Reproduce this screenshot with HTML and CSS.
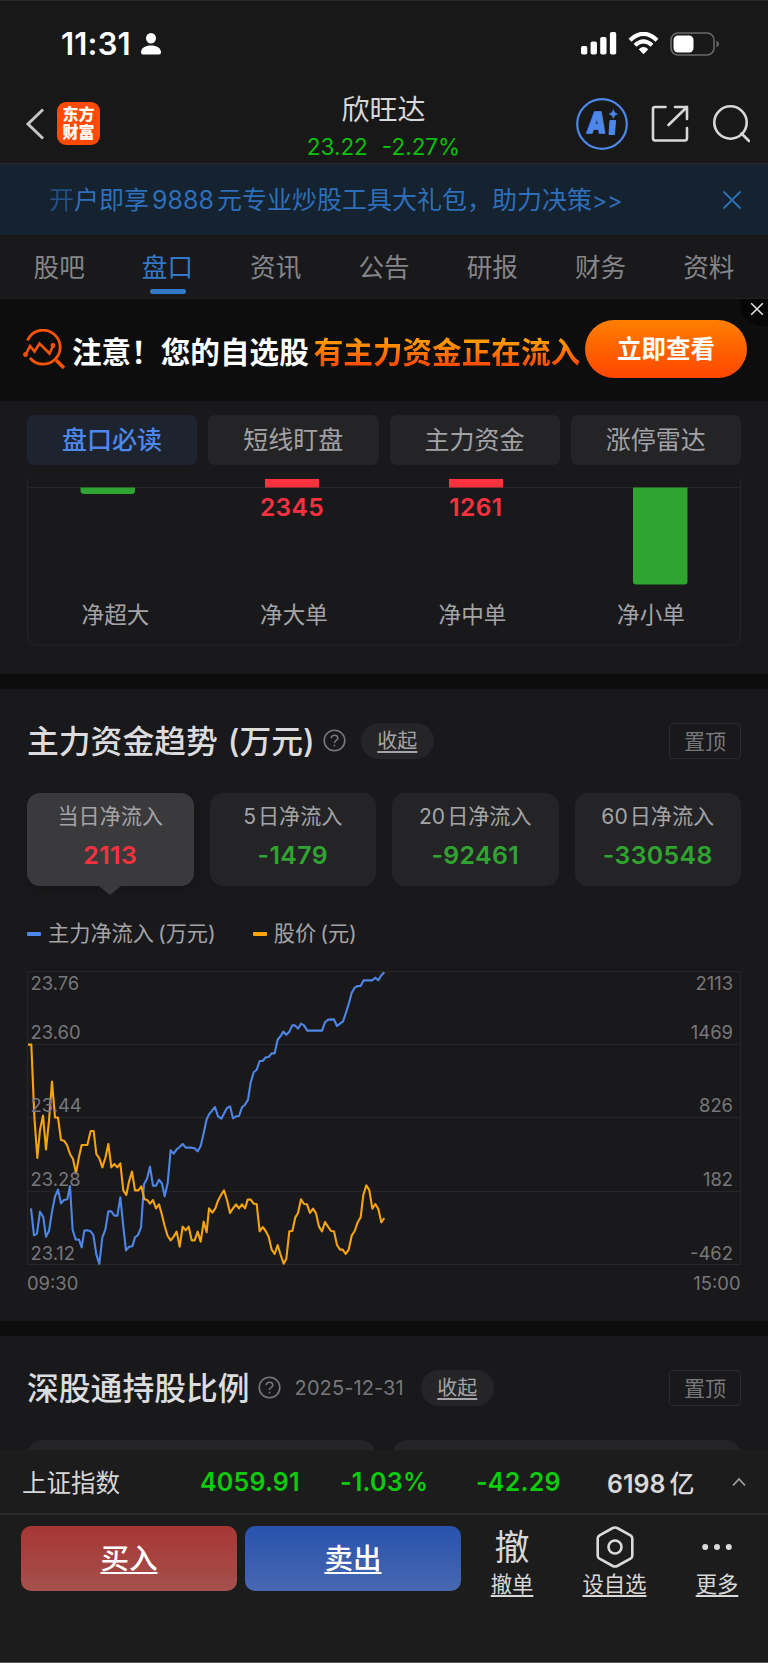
FILE: index.html
```html
<!DOCTYPE html>
<html lang="zh-CN">
<head>
    <meta charset="UTF-8">
    <meta name="viewport" content="width=device-width, initial-scale=1.0">
    <title>欣旺达 - 盘口</title>
    <link rel="stylesheet" href="styles.css">
</head>
<body>

    <!-- Status bar -->
    <div class="status-bar">
        <span class="time">11:31</span>
        <svg class="person" width="20" height="22" viewBox="0 0 20 22" fill="#fff">
            <ellipse cx="10" cy="5.3" rx="5" ry="5.3"/>
            <path d="M0 19.500C0 15 4.500 12.500 10 12.500S20 15 20 19.500Q20 21.500 18 21.500H2Q0 21.500 0 19.500Z"/>
        </svg>
        <div class="status-icons">
            <svg width="36" height="23" viewBox="0 0 36 23" fill="#fff">
                <rect x="0" y="14" width="6.300" height="8.500" rx="1.800"/>
                <rect x="9.600" y="9.500" width="6.300" height="13" rx="1.800"/>
                <rect x="19.200" y="5" width="6.300" height="17.500" rx="1.800"/>
                <rect x="28.900" y="0" width="6.300" height="22.500" rx="1.800"/>
            </svg>
            <svg width="31" height="23" viewBox="0 0 31 23">
                <path d="M2 8.200Q15.500 -4.500 29 8.200" fill="none" stroke="#fff" stroke-width="4.200"/>
                <path d="M7 13.300Q15.500 5.500 24 13.300" fill="none" stroke="#fff" stroke-width="4"/>
                <path d="M10.700 17.200Q15.500 13 20.300 17.200L15.500 22.300Z" fill="#fff"/>
            </svg>
            <svg width="50" height="24" viewBox="0 0 50 24">
                <rect x="1" y="1" width="43" height="22" rx="7" fill="none" stroke="#69696a" stroke-width="1.600"/>
                <rect x="3.500" y="3.500" width="20" height="17" rx="4.500" fill="#fff"/>
                <path d="M46.500 8.500Q49 9.500 49 12T46.500 15.500Z" fill="#69696a"/>
            </svg>
        </div>
    </div>

    <!-- Stock header -->
    <header class="header">
        <div class="header-left">
            <svg width="20" height="32" viewBox="0 0 20 32" fill="none" stroke="#c4c4c4" stroke-width="3">
                <path d="M18 1.500L3 16L18 30.500"/>
            </svg>
            <div class="logo"><span>东方</span><span>财富</span></div>
        </div>
        <div class="stock">
            <h1>欣旺达</h1>
            <p><span>23.22</span><span>-2.27%</span></p>
        </div>
        <div class="header-right">
            <svg class="ai" width="52" height="52" viewBox="0 0 52 52">
                <circle cx="26" cy="26" r="24.800" fill="none" stroke="#4d87ea" stroke-width="2.200"/>
                <text x="14" y="35.500" textLength="19" lengthAdjust="spacingAndGlyphs" transform="skewX(-6)">A</text>
                <path d="M34 22.500H39.500L38.500 36.500H33Z" fill="#4d87ea" stroke="#4d87ea" stroke-linejoin="round"/>
                <path d="M37.300 11.500Q38 15.300 41.500 16Q38 16.700 37.300 20.500Q36.500 16.700 33 16Q36.500 15.300 37.300 11.500Z" fill="#4d87ea" stroke="#4d87ea" stroke-width=".6"/>
            </svg>
            <svg width="38" height="38" viewBox="0 0 38 38" fill="none" stroke="#d8d8d8" stroke-width="2.600" stroke-linecap="round">
                <path d="M14.500 2H4Q2 2 2 4V33Q2 35.500 4 35.500H34Q36 35.500 36 33V23"/>
                <path d="M24 2H36V14M36 2L17.500 20"/>
            </svg>
            <svg width="38" height="38" viewBox="0 0 38 38" fill="none" stroke="#d8d8d8" stroke-width="2.600" stroke-linecap="round">
                <circle cx="18.500" cy="17.500" r="16.200"/>
                <path d="M29.500 28.500L37 36"/>
            </svg>
        </div>
    </header>

    <!-- Promo line -->
    <div class="promo">
        <p><i>开</i>户即享<b>9888</b>元专业炒股工具大礼包，助力决策<em>&gt;&gt;</em></p>
        <svg width="20" height="20" viewBox="0 0 20 20" stroke="#2d6fba" stroke-width="1.800">
            <path d="M1.500 1.500L18.500 18.500M18.500 1.500L1.500 18.500"/>
        </svg>
    </div>

    <nav class="tabs">
        <a>股吧</a>
        <a class="active">盘口</a>
        <a>资讯</a>
        <a>公告</a>
        <a>研报</a>
        <a>财务</a>
        <a>资料</a>
    </nav>

    <!-- Ad banner -->
    <div class="ad">
        <svg width="43" height="41" viewBox="0 0 43 41" fill="none" stroke="#fa5408" stroke-width="2.800">
            <path d="M4.500 11.500A17 17 0 1 1 7 29"/>
            <path d="M33 31L41 39" stroke-width="3.600"/>
            <path d="M3 25L7 17L11.500 22.500L16.500 14.500L26.500 24.500L30 17" stroke-width="2.500"/>
            <circle cx="2.500" cy="25.500" r="1" /><circle cx="30" cy="16.500" r="1"/>
        </svg>
        <p>注意！您的自选股<span>有主力资金正在流入</span></p>
        <button>立即查看</button>
        <div class="ad-close">
            <svg width="14" height="14" viewBox="0 0 14 14" stroke="#e8e8e8" stroke-width="1.500">
                <path d="M1.200 1.200L12.800 12.800M12.800 1.200L1.200 12.800"/>
            </svg>
        </div>
    </div>

    <div class="filters">
        <a class="active">盘口必读</a>
        <a>短线盯盘</a>
        <a>主力资金</a>
        <a>涨停雷达</a>
    </div>

    <!-- Order size bars, scrolled under the filters -->
    <section class="orders">
        <svg width="714" height="167" viewBox="0 0 714 167">
            <path d="M.5 0V156Q.5 166 10.500 166H703.500Q713.500 166 713.500 156V0M0 8.500H714" fill="none" stroke="#262628"/>
            <path d="M53.500 8.500H108V11.500Q108 15 104.500 15H57Q53.500 15 53.500 11.500Z" fill="#30a431"/>
            <path d="M238 0H292V8.500H238ZM422 0H476V8.500H422Z" fill="#fc3140"/>
            <path d="M606 8.500H660.500V102.500Q660.500 105.500 657.500 105.500H609Q606 105.500 606 102.500Z" fill="#30a431"/>
            <g class="order-value">
                <text x="265" y="37">2345</text>
                <text x="449" y="37">1261</text>
            </g>
            <g class="order-label">
                <text x="88.500" y="144">净超大</text>
                <text x="267" y="144">净大单</text>
                <text x="445.500" y="144">净中单</text>
                <text x="624" y="144">净小单</text>
            </g>
        </svg>
    </section>

    <!-- Main capital trend -->
    <section class="trend">
        <div class="section-head">
            <h2>主力资金趋势<span class="unit">(万元)</span></h2>
            <svg class="help" width="23" height="23" viewBox="0 0 23 23">
                <circle cx="11.500" cy="11.500" r="10.300"/>
                <path d="M8.200 9.200Q8.400 6.300 11.500 6.300T14.800 9Q14.800 10.400 13.200 11.400Q11.500 12.400 11.500 14"/>
                <path d="M11.500 15.800V17.400"/>
            </svg>
            <a class="fold">收起</a>
            <a class="pin">置顶</a>
        </div>

        <div class="cards">
            <div class="card active"><span>当日净流入</span><b class="up">2113</b></div>
            <div class="card"><span><i>5</i>日净流入</span><b>-1479</b></div>
            <div class="card"><span><i>20</i>日净流入</span><b>-92461</b></div>
            <div class="card"><span><i>60</i>日净流入</span><b>-330548</b></div>
        </div>

        <div class="legend">
            <span class="blue">主力净流入<i>(万元)</i></span>
            <span class="orange">股价<i>(元)</i></span>
        </div>

        <svg class="chart" width="714" height="336" viewBox="0 0 714 336">
            <path class="grid" d="M0 6.500H714M0 79.500H714M0 152.500H714M0 226.500H714M0 299.500H714M.5 6V300M713.500 6V300"/>
            <g transform="translate(-12 -10) scale(.33333)" class="lines">
                <polyline stroke="#4d86e6" points="48,760 57,841 66,836 75,770 85,787 93,845 102,828 111,770 120,725 129,704 138,745 147,735 157,733 165,693 173,825 182,853 192,854 200,877 208,827 217,826 227,829 235,840 244,898 253,927 262,847 271,824 280,769 289,769 298,782 307,782 316,727 325,815 333,886 343,875 352,874 360,847 369,840 378,818 387,688 396,671 405,635 414,692 423,692 432,674 441,686 449,724 458,685 467,586 476,596 485,583 494,576 503,567 512,578 521,578 530,578 539,580 548,589 557,573 566,535 575,493 582,478 600,456 609,484 619,491 628,474 636,459 645,454 654,490 663,484 672,483 681,457 690,449 699,434 707,383 716,352 725,344 734,318 743,318 752,307 761,306 770,295 779,295 788,254 797,243 805,230 814,239 823,230 832,211 840,211 849,221 858,206 867,211 877,227 921,227 930,202 939,194 957,193 966,213 975,206 984,199 993,173 1002,144 1010,114 1019,98 1028,93 1037,93 1046,76 1072,76 1081,68 1090,76 1099,61 1108,52"/>
                <polyline stroke="#f5a313" points="39,269 49,269 58,485 67,609 75,525 84,482 93,583 102,497 111,380 120,487 129,488 138,555 147,557 156,570 165,597 174,612 183,655 192,605 200,570 217,570 227,528 236,528 244,597 253,610 262,637 271,609 280,567 289,637 298,627 307,637 316,625 325,707 334,720 342,680 351,650 360,706 370,706 379,694 388,733 397,735 405,746 414,735 423,760 432,748 441,780 449,813 458,843 467,856 476,845 485,830 494,875 503,815 512,826 521,815 530,856 539,856 548,830 557,860 566,800 575,832 582,760 592,773 601,760 609,737 618,720 627,706 636,735 645,774 654,760 663,748 672,760 681,748 690,760 698,734 707,734 716,746 725,747 734,829 743,816 752,828 761,845 770,884 779,897 788,870 797,900 806,926 814,911 823,829 832,828 841,787 849,774 858,733 867,747 876,748 885,774 894,761 903,775 912,815 921,829 930,801 939,815 948,828 957,829 966,870 975,884 983,884 992,897 1001,884 1010,842 1019,828 1028,802 1037,787 1045,720 1054,691 1063,706 1072,761 1081,747 1090,762 1099,802 1108,789"/>
            </g>
            <g class="axis">
                <text x="3.500" y="25">23.76</text>
                <text x="3.500" y="73.500">23.60</text>
                <text x="3.500" y="147">23.44</text>
                <text x="3.500" y="221">23.28</text>
                <text x="3.500" y="294.500">23.12</text>
                <text x="0" y="325">09:30</text>
            </g>
            <g class="axis right">
                <text x="706" y="25">2113</text>
                <text x="706" y="73.500">1469</text>
                <text x="706" y="147">826</text>
                <text x="706" y="221">182</text>
                <text x="706" y="294.500">-462</text>
                <text x="713.500" y="325">15:00</text>
            </g>
        </svg>
    </section>

    <!-- Shenzhen connect holdings -->
    <section class="holding">
        <div class="section-head">
            <h2>深股通持股比例</h2>
            <svg class="help" width="23" height="23" viewBox="0 0 23 23">
                <circle cx="11.500" cy="11.500" r="10.300"/>
                <path d="M8.200 9.200Q8.400 6.300 11.500 6.300T14.800 9Q14.800 10.400 13.200 11.400Q11.500 12.400 11.500 14"/>
                <path d="M11.500 15.800V17.400"/>
            </svg>
            <time>2025-12-31</time>
            <a class="fold">收起</a>
            <a class="pin">置顶</a>
        </div>
        <div class="peek"><div></div><div></div></div>
    </section>

    <!-- Bottom bars -->
    <div class="index-bar">
        <span>上证指数</span>
        <b>4059.91</b>
        <b>-1.03%</b>
        <b>-42.29</b>
        <span class="amount">6198<i>亿</i></span>
        <svg width="14" height="10" viewBox="0 0 14 10" fill="none" stroke="#a0a0a0" stroke-width="1.800">
            <path d="M1 8.500L7 2L13 8.500"/>
        </svg>
    </div>

    <footer class="actions">
        <a class="trade buy">买入</a>
        <a class="trade sell">卖出</a>
        <a class="tool">
            <span class="glyph">撤</span>
            <u>撤单</u>
        </a>
        <a class="tool wide">
            <svg width="40" height="42" viewBox="0 0 40 42" fill="none" stroke="#dadada" stroke-width="2.600">
                <path d="M17.800 2Q20 .9 22.200 2L35.500 9.300Q37.300 10.400 37.300 12.500V29.500Q37.300 31.600 35.500 32.700L22.200 40Q20 41.100 17.800 40L4.500 32.700Q2.700 31.600 2.700 29.500V12.500Q2.700 10.400 4.500 9.300Z"/>
                <circle cx="20" cy="21" r="6.500"/>
            </svg>
            <u>设自选</u>
        </a>
        <a class="tool">
            <svg width="32" height="42" viewBox="0 0 32 42" fill="#dadada">
                <circle cx="4.200" cy="21" r="3"/><circle cx="16" cy="21" r="3"/><circle cx="27.800" cy="21" r="3"/>
            </svg>
            <u>更多</u>
        </a>
    </footer>

</body>
</html>
```
FILE: styles.css
```css
* {
    margin: 0;
    padding: 0;
    box-sizing: border-box;
}
body {
    width: 768px;
    height: 1663px;
    overflow: hidden;
    background: #19191b;
    color: #d8d8d8;
    font-family: "Inter", "Noto Sans CJK SC", sans-serif;
    display: flex;
    flex-direction: column;
    white-space: nowrap;
}
body > * {
    flex-shrink: 0;
}
svg {
    display: block;
    flex-shrink: 0;
}
i, em {
    font-style: normal;
}

/* status bar */
.status-bar {
    height: 84px;
    padding: 2px 53px 0 61px;
    border-top: 1px solid #262626;
    background: #181818;
    display: flex;
    align-items: center;
}
.time {
    width: 80px;
    font-size: 31px;
    font-weight: 600;
    letter-spacing: 0.2px;
    color: #fff;
}
.status-icons {
    margin-left: auto;
    display: flex;
    align-items: center;
    gap: 11px;
}
.status-icons svg:last-child {
    margin-right: -5px;
}

/* header */
.header {
    height: 80px;
    padding: 0 18px 0 25px;
    background: #181818;
    border-bottom: 1px solid #262626;
    display: grid;
    grid-template-columns: 1fr 200px 1fr;
}
.header-left {
    display: flex;
    align-items: center;
    gap: 12px;
}
.logo {
    width: 43px;
    height: 43px;
    border-radius: 9px;
    background: #ff4a03;
    color: #fff;
    font-size: 16px;
    font-weight: 900;
    line-height: 18px;
    padding-bottom: 2px;
    display: flex;
    flex-direction: column;
    align-items: center;
    justify-content: center;
}
.stock {
    text-align: center;
    margin-left: -8px;
}
.stock h1 {
    font-size: 28px;
    font-weight: 400;
    line-height: 34px;
    margin-top: 9px;
}
.stock p {
    display: flex;
    justify-content: center;
    gap: 14px;
    font-size: 22.5px;
    line-height: 30px;
    margin-top: 5px;
    color: #0bc00b;
}
.header-right {
    display: flex;
    align-items: center;
    justify-content: flex-end;
    gap: 23px;
}
.ai text {
    font-size: 29px;
    font-weight: 900;
    fill: #4d87ea;
    stroke: #4d87ea;
    stroke-width: 1.4;
}

/* promo */
.promo {
    height: 71px;
    padding: 0 26px 0 49px;
    background: #152230;
    color: #2d6fba;
    display: flex;
    align-items: center;
    justify-content: space-between;
}
.promo p {
    font-size: 25px;
    margin-top: -3px;
}
.promo p i {
    opacity: 0.6;
}
.promo b {
    font-weight: 400;
    margin: 0 3px 0 3px;
}
.promo em {
    font-size: 23px;
}

/* tabs */
.tabs {
    height: 64px;
    padding: 0 5px;
    border-bottom: 1px solid #202022;
    display: grid;
    grid-template-columns: repeat(7, 1fr);
}
.tabs a {
    position: relative;
    text-align: center;
    font-size: 25.6px;
    line-height: 65px;
    color: #85858a;
}
.tabs .active {
    color: #3478c8;
}
.tabs .active::after {
    content: "";
    position: absolute;
    left: 50%;
    bottom: 6px;
    width: 36px;
    height: 5px;
    margin-left: -17px;
    border-radius: 3px;
    background: #3478c8;
}

/* ad */
.ad {
    position: relative;
    height: 102px;
    padding: 0 0 2px 23px;
    background: #0d0d0d;
    display: flex;
    align-items: center;
    overflow: hidden;
}
.ad p {
    width: 513px;
    margin: 2px 0 0 6px;
    font-size: 29.6px;
    font-weight: 700;
    color: #fff;
    flex-shrink: 0;
}
.ad p span {
    margin-left: 5px;
    background: linear-gradient(#ff9a00 20%, #ff5200 80%);
    -webkit-background-clip: text;
    background-clip: text;
    color: transparent;
}
.ad button {
    width: 162px;
    height: 58px;
    padding-bottom: 4px;
    border: none;
    border-radius: 29px;
    background: linear-gradient(#ff7f00, #ff4600);
    color: #fff;
    font-family: inherit;
    font-size: 24.5px;
    font-weight: 700;
    flex-shrink: 0;
}
.ad-close {
    position: absolute;
    right: -18px;
    top: -19px;
    width: 46px;
    height: 46px;
    border-radius: 50%;
    background: #060606;
    padding: 22px 0 0 10px;
}

/* filters */
.filters {
    height: 78px;
    padding: 14px 27px;
    display: grid;
    grid-template-columns: repeat(4, 1fr);
    gap: 11px;
}
.filters a {
    border-radius: 7px;
    background: #242426;
    color: #a2a2a5;
    text-align: center;
    font-size: 25px;
    line-height: 50px;
}
.filters .active {
    background: #1d242f;
    color: #4d87ea;
    font-weight: 500;
}

/* order bars */
.orders {
    height: 195px;
    padding: 0 27px;
}
.order-value {
    font-size: 24.5px;
    font-weight: 600;
    letter-spacing: 0.4px;
    fill: #fc3140;
    text-anchor: middle;
}
.order-label {
    font-size: 22.6px;
    fill: #a4a4a6;
    text-anchor: middle;
}

/* sections */
.trend, .holding {
    border-top: 15px solid #0d0d0d;
    padding: 0 27px;
}
.trend {
    height: 647px;
}
.holding {
    height: 129px;
    overflow: hidden;
}
.section-head {
    height: 104px;
    padding-bottom: 1px;
    display: flex;
    align-items: center;
}
.section-head h2 {
    margin-top: -3px;
    font-size: 31.8px;
    font-weight: 500;
    color: #dcdcde;
}
.unit {
    margin-left: 10px;
}
.help {
    margin-left: 8px;
    fill: none;
    stroke: #77777a;
    stroke-width: 1.6;
}
.section-head time {
    margin-left: 14px;
    font-size: 20px;
    letter-spacing: 0.1px;
    color: #77777a;
}
.fold {
    width: 73px;
    height: 36px;
    margin-left: 15px;
    border-radius: 18px;
    background: #252527;
    color: #a4a4a6;
    font-size: 20px;
    line-height: 37px;
    text-align: center;
    text-decoration: underline;
    text-underline-offset: 3px;
}
time + .fold {
    margin-left: 17px;
}
.pin {
    width: 72px;
    height: 36px;
    margin-left: auto;
    border: 1px solid #2b2b2d;
    border-radius: 4px;
    color: #77777a;
    font-size: 21px;
    line-height: 35px;
    text-align: center;
}

/* cards */
.cards {
    display: grid;
    grid-template-columns: repeat(4, 1fr);
    gap: 16px;
}
.card {
    position: relative;
    height: 93px;
    border-radius: 13px;
    background: #242426;
    display: flex;
    flex-direction: column;
    align-items: center;
}
.card span {
    margin-top: 7px;
    font-size: 21.1px;
    line-height: 34px;
    color: #a4a4a6;
}
.card i {
    margin-right: 2px;
}
.card b {
    margin-top: 6px;
    font-size: 24.8px;
    font-weight: 600;
    line-height: 30px;
    letter-spacing: 0.4px;
    color: #30a431;
}
.card .up {
    color: #fc3140;
}
.card.active {
    background: #3a3a3c;
    box-shadow: 0 2px 12px rgba(0, 0, 0, 0.2);
}
.card.active::after {
    content: "";
    position: absolute;
    top: 100%;
    left: 50%;
    margin-left: -11px;
    border: 11px solid transparent;
    border-top: 9px solid #3a3a3c;
    border-bottom: 0;
}

/* legend */
.legend {
    height: 79px;
    padding-top: 14px;
    display: flex;
    align-items: center;
    gap: 37px;
    font-size: 21.2px;
    line-height: 26px;
    color: #a4a4a6;
}
.legend span {
    display: flex;
    align-items: center;
}
.legend span::before {
    content: "";
    width: 14px;
    height: 4px;
    margin: 2px 7px 0 0;
    border-radius: 1px;
    background: #4d87ea;
}
.legend .orange::before {
    background: #ffa408;
}
.legend i {
    margin-left: 4px;
}

/* chart */
.grid {
    fill: none;
    stroke: #262628;
}
.lines {
    fill: none;
    stroke-width: 6.3;
    stroke-linejoin: round;
}
.axis {
    font-size: 18.4px;
    fill: #77777a;
}
.axis.right {
    text-anchor: end;
}

.peek {
    display: grid;
    grid-template-columns: 1fr 1fr;
    gap: 16px;
}
.peek div {
    height: 93px;
    border-radius: 15px;
    background: #242426;
}

/* index bar */
.index-bar {
    height: 65px;
    padding: 0 22px;
    background: #1c1c1c;
    border-bottom: 2px solid #292929;
    display: grid;
    grid-template-columns: 178px 140px 136px 131px 1fr 14px;
    align-items: center;
    font-size: 24.5px;
}
.index-bar b {
    font-size: 25px;
    font-weight: 600;
    color: #0bcb0b;
    letter-spacing: 0.2px;
}
.amount {
    font-size: 25px;
    font-weight: 600;
}
.amount i {
    margin-left: 4px;
    font-weight: 500;
}

/* actions */
.actions {
    height: 148px;
    padding: 11px 21px 0;
    background: #1c1c1c;
    border-bottom: 1px solid #555;
    display: flex;
}
.actions a {
    flex-shrink: 0;
}
.trade {
    width: 216px;
    height: 65px;
    margin-right: 8px;
    border-radius: 10px;
    color: #fff;
    font-size: 28.5px;
    font-weight: 500;
    line-height: 65px;
    text-align: center;
    text-decoration: underline;
    text-underline-offset: 3px;
    text-decoration-thickness: 2px;
}
.buy {
    background: linear-gradient(#a83633, #a4514d);
}
.sell {
    background: linear-gradient(#2852ae, #4868b0);
}
.tool {
    width: 86px;
    display: flex;
    flex-direction: column;
    align-items: center;
}
.tool.wide {
    width: 119px;
}
.glyph {
    font-size: 35px;
    line-height: 42px;
}
.tool u {
    margin-top: 2px;
    font-size: 21.3px;
    line-height: 28px;
    text-underline-offset: 3px;
    text-decoration-thickness: 2px;
}
```
